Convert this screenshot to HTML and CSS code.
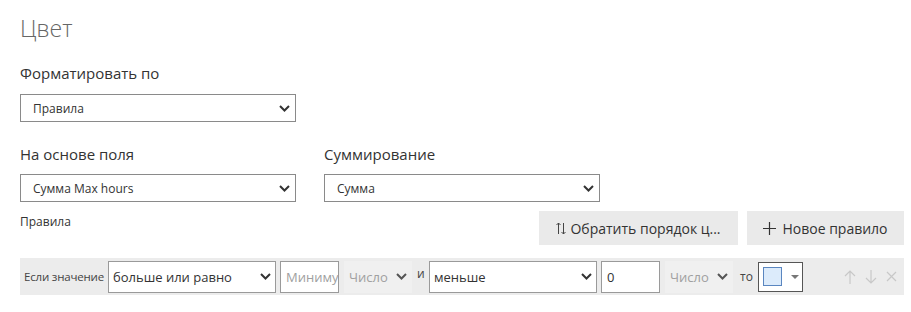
FILE: index.html
```html
<!DOCTYPE html>
<html lang="ru">
<head>
<meta charset="utf-8">
<link rel="stylesheet" href="styles.css">
</head>
<body>
<div class="page">
  <h1 class="title">Цвет</h1>

  <div class="label l-format">Форматировать по</div>
  <div class="select w276">
    <span>Правила</span>
    <svg class="chev" width="11" height="7" viewBox="0 0 11 7"><path d="M1 1l4.5 4.5L10 1" fill="none" stroke="#333" stroke-width="2"/></svg>
  </div>

  <div class="two-col">
    <div class="col">
      <div class="label">На основе поля</div>
      <div class="select w276">
        <span>Сумма Max hours</span>
        <svg class="chev" width="11" height="7" viewBox="0 0 11 7"><path d="M1 1l4.5 4.5L10 1" fill="none" stroke="#333" stroke-width="2"/></svg>
      </div>
    </div>
    <div class="col">
      <div class="label">Суммирование</div>
      <div class="select w276">
        <span>Сумма</span>
        <svg class="chev" width="11" height="7" viewBox="0 0 11 7"><path d="M1 1l4.5 4.5L10 1" fill="none" stroke="#333" stroke-width="2"/></svg>
      </div>
    </div>
  </div>

  <div class="rules-head">
    <div class="small-label">Правила</div>
    <div class="buttons">
      <div class="btn btn-rev">
        <svg width="10" height="13" viewBox="0 0 10 13"><path d="M2.5 12V1M0.5 3l2-2 2 2M7.5 1v11M5.5 10l2 2 2-2" fill="none" stroke="#444" stroke-width="1"/></svg>
        <span>Обратить порядок ц...</span>
      </div>
      <div class="btn btn-new">
        <svg width="13" height="13" viewBox="0 0 13 13"><path d="M6.5 0v13M0 6.5h13" fill="none" stroke="#333" stroke-width="1.2"/></svg>
        <span>Новое правило</span>
      </div>
    </div>
  </div>

  <div class="rule-row">
    <span class="txt if">Если значение</span>
    <div class="select rsel w168">
      <span>больше или равно</span>
      <svg class="chev" width="11" height="7" viewBox="0 0 11 7"><path d="M1 1l4.5 4.5L10 1" fill="none" stroke="#333" stroke-width="2"/></svg>
    </div>
    <div class="input ph">Минимум</div>
    <div class="dis">
      <span>Число</span>
      <svg class="chev" width="11" height="7" viewBox="0 0 11 7"><path d="M1 1l4.5 4.5L10 1" fill="none" stroke="#555" stroke-width="2"/></svg>
    </div>
    <span class="txt and">и</span>
    <div class="select rsel w168">
      <span>меньше</span>
      <svg class="chev" width="11" height="7" viewBox="0 0 11 7"><path d="M1 1l4.5 4.5L10 1" fill="none" stroke="#333" stroke-width="2"/></svg>
    </div>
    <div class="input">0</div>
    <div class="dis">
      <span>Число</span>
      <svg class="chev" width="11" height="7" viewBox="0 0 11 7"><path d="M1 1l4.5 4.5L10 1" fill="none" stroke="#555" stroke-width="2"/></svg>
    </div>
    <span class="txt to">то</span>
    <div class="picker">
      <span class="swatch"></span>
      <svg width="8" height="4" viewBox="0 0 8 4"><path d="M0 0h8L4 4z" fill="#777"/></svg>
    </div>
    <div class="actions">
      <svg width="12" height="14" viewBox="0 0 12 14"><path d="M6 14V1M1 6l5-5 5 5" fill="none" stroke="#c8c8c8" stroke-width="1.2"/></svg>
      <svg width="12" height="14" viewBox="0 0 12 14"><path d="M6 0v13M1 8l5 5 5-5" fill="none" stroke="#c8c8c8" stroke-width="1.2"/></svg>
      <svg width="11" height="11" viewBox="0 0 11 11"><path d="M1 1l9 9M10 1l-9 9" fill="none" stroke="#c8c8c8" stroke-width="1.2"/></svg>
    </div>
  </div>
</div>
</body>
</html>
```

FILE: styles.css
```css
* { box-sizing: border-box; }
html, body { margin: 0; padding: 0; background: #fff; }
body {
  font-family: "Open Sans", "Noto Sans", sans-serif;
  color: #333;
}
.page {
  padding: 11px 0 0 20px;
  width: 911px;
}
.title {
  margin: 0;
  font-size: 23px;
  font-weight: 300;
  color: #666;
  line-height: 34px;
  height: 34px;
}
.label {
  font-size: 15px;
  line-height: 20px;
  color: #333;
}
.l-format { margin-top: 18px; margin-bottom: 11px; }
.select {
  flex: none;
  height: 28px;
  border: 1px solid #8a8a8a;
  background: #fff;
  display: flex;
  align-items: center;
  justify-content: space-between;
  padding: 0 5px 0 12px;
  font-size: 12px;
  color: #333;
}
.w276 { width: 276px; }
.two-col {
  display: flex;
  gap: 28px;
  margin-top: 22px;
}
.two-col .label { margin-bottom: 10px; }
.rules-head {
  display: flex;
  justify-content: space-between;
  width: 884px;
  margin-top: 9px;
}
.small-label {
  font-size: 12px;
  line-height: 16px;
  margin-top: 3px;
}
.buttons { display: flex; gap: 9px; }
.btn {
  height: 34px;
  background: #eaeaea;
  display: flex;
  align-items: center;
  justify-content: center;
  gap: 4px;
  font-size: 14px;
  color: #333;
}
.btn-rev { width: 199px; }
.btn-new { width: 157px; gap: 6px; }
.rule-row {
  margin-top: 13px;
  width: 884px;
  height: 37px;
  background: #ececec;
  display: flex;
  align-items: center;
  padding-left: 4px;
}
.txt { font-size: 12px; color: #444; flex: none; white-space: nowrap; }
.if { width: 84px; font-size: 11.5px; letter-spacing: -0.2px; }
.rsel {
  height: 32px;
  font-size: 13px;
  padding: 0 4px 0 4px;
  border-color: #9a9a9a;
}
.w168 { width: 168px; }
.input {
  flex: none;
  width: 59px;
  height: 32px;
  border: 1px solid #9a9a9a;
  background: #fff;
  margin-left: 4px;
  display: flex;
  align-items: center;
  padding-left: 5px;
  font-size: 13px;
  color: #333;
  white-space: nowrap;
  overflow: hidden;
}
.input.ph { color: #a0a0a0; }
.dis {
  flex: none;
  width: 68px;
  height: 32px;
  margin-left: 5px;
  background: #f0f0f0;
  display: flex;
  align-items: center;
  justify-content: space-between;
  padding: 0 5px 0 5px;
  font-size: 13px;
  color: #a0a0a0;
}
.and { width: 17px; padding-left: 5px; margin-bottom: 6px; }
.to { width: 25px; padding-left: 7px; }
.picker {
  flex: none;
  width: 45px;
  height: 30px;
  border: 1px solid #555;
  background: #fff;
  display: flex;
  align-items: center;
  padding-left: 4px;
  gap: 9px;
}
.swatch {
  width: 19px;
  height: 19px;
  background: #dcebfb;
  border: 1px solid #5a86c0;
}
.actions {
  display: flex;
  align-items: center;
  gap: 9px;
  margin-left: 41px;
}
```
